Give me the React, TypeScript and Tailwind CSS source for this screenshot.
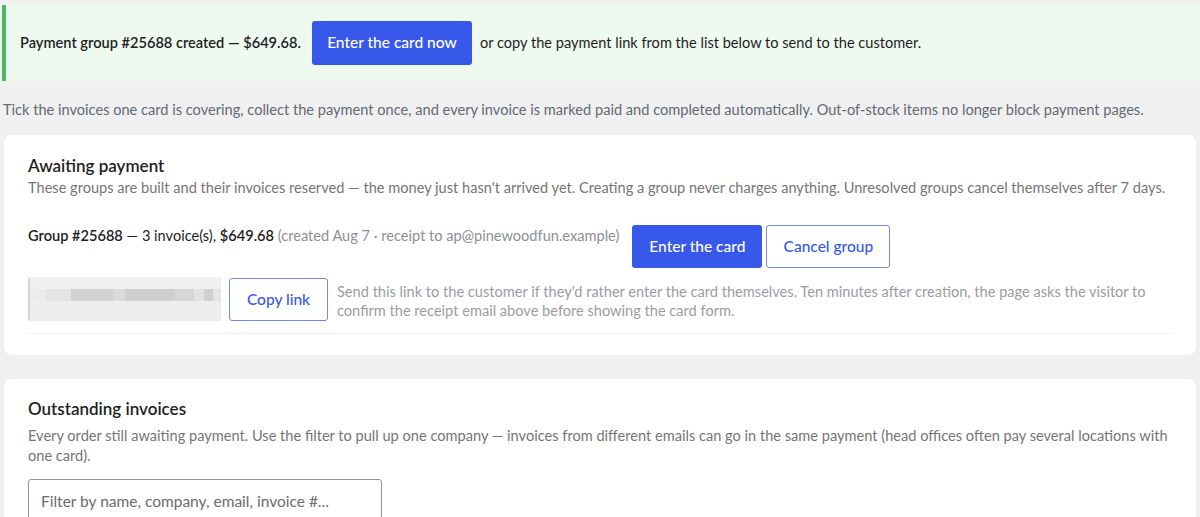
import React from 'react'

const blur = [
  { w: 26, c: 'bg-[#e4e4e4]' },
  { w: 44, c: 'bg-[#d2d2d2]' },
  { w: 12, c: 'bg-[#dadada]' },
  { w: 52, c: 'bg-[#cfcfcf]' },
  { w: 20, c: 'bg-[#d6d6d6]' },
  { w: 10, c: 'bg-[#e2e2e2]' },
  { w: 10, c: 'bg-[#d0d0d0]' },
  { w: 8, c: 'bg-[#e4e4e4]' },
]

export default function App() {
  return (
    <div className="min-h-screen bg-[#f0f0f1] pt-[5px] font-['Lato',sans-serif] text-[14.6px] text-[#1e1e1e]">
      {/* Notice */}
      <div className="ml-[2px] flex h-[76px] items-center border-l-4 border-[#4ab866] bg-[#eef9f0] pl-[14px]">
        <span className="font-semibold">Payment group #25688 created — $649.68.</span>
        <button className="ml-[11px] h-[44px] w-[160px] rounded-[3px] bg-[#3858e9] text-[15.5px] font-medium text-white">
          Enter the card now
        </button>
        <span className="ml-2">or copy the payment link from the list below to send to the customer.</span>
      </div>

      <p className="mt-[19px] px-[3px] leading-5 text-[#646970]">
        Tick the invoices one card is covering, collect the payment once, and every invoice is marked paid and completed automatically. Out-of-stock items no longer block payment pages.
      </p>

      {/* Awaiting payment */}
      <div className="mx-[4px] mt-[15px] rounded-lg bg-white px-6 pb-[21px] pt-[19px]">
        <h2 className="text-[17px] font-semibold leading-6">Awaiting payment</h2>
        <p className="leading-5 text-[#757575]">
          These groups are built and their invoices reserved — the money just hasn't arrived yet. Creating a group never charges anything. Unresolved groups cancel themselves after 7 days.
        </p>

        <div className="border-b border-[#f0f0f0] pb-[12px]">
          <div className="mt-[26px] flex items-start">
            <div className="pt-[2px] leading-5">
              <span className="font-semibold">Group #25688</span> — 3 invoice(s), <span className="font-semibold">$649.68</span>{' '}
              <span className="text-[#8c8f94]">(created Aug 7 · receipt to ap@pinewoodfun.example)</span>
            </div>
            <button className="ml-[13px] mt-px h-[43px] w-[130px] rounded-[3px] bg-[#3858e9] text-[15.5px] font-medium text-white">
              Enter the card
            </button>
            <button className="ml-[4px] mt-px h-[43px] w-[124px] rounded-[3px] border border-[#7489f0] text-[15.5px] font-medium text-[#3858e9]">
              Cancel group
            </button>
          </div>

          <div className="mt-[9px] flex items-start">
            <div className="flex h-[44px] w-[193px] shrink-0 flex-col rounded-l-[3px] border-l-2 border-[#d4d4d4] bg-[#ededed]">
              <div className="h-[12px] bg-[#f0f0f0]" />
              <div className="flex h-[12px] items-center bg-[#ebebeb] pl-[16px]">
                {blur.map((b, i) => (
                  <div key={i} className={`h-[12px] ${b.c}`} style={{ width: b.w }} />
                ))}
              </div>
              <div className="flex-1 bg-[#eeeeee]" />
            </div>
            <button className="ml-[8px] mt-px h-[43px] w-[99px] shrink-0 rounded-[3px] border border-[#7489f0] text-[15.5px] font-medium text-[#3858e9]">
              Copy link
            </button>
            <p className="ml-[9px] mt-[5px] leading-[19px] text-[#9a9ca3]">
              Send this link to the customer if they'd rather enter the card themselves. Ten minutes after creation, the page asks the visitor to confirm the receipt email above before showing the card form.
            </p>
          </div>
        </div>
      </div>

      {/* Outstanding invoices */}
      <div className="mx-[4px] mt-[24px] rounded-lg bg-white px-6 pb-6 pt-[18px]">
        <h2 className="text-[17px] font-semibold leading-6">Outstanding invoices</h2>
        <p className="mt-[5px] leading-5 text-[#757575]">
          Every order still awaiting payment. Use the filter to pull up one company — invoices from different emails can go in the same payment (head offices often pay several locations with one card).
        </p>
        <input
          className="mt-[13px] h-[44px] w-[354px] rounded-[3px] border border-[#949494] px-[12px] text-[15.5px] placeholder:text-[#6b6b6b] focus:outline-none"
          placeholder="Filter by name, company, email, invoice #..."
        />
      </div>
    </div>
  )
}
